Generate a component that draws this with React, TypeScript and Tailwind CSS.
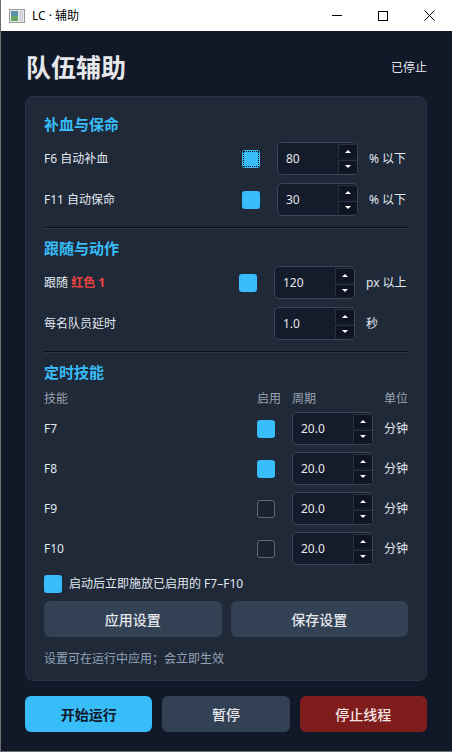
import React from "react";

const font = { fontFamily: '"Noto Sans", "Noto Sans CJK SC", sans-serif' };

function WindowIcon() {
  return (
    <svg width="16" height="14" viewBox="0 0 16 14">
      <rect x="0.5" y="0.5" width="15" height="13" fill="#e8e8e8" stroke="#9a9a9a" />
      <rect x="2" y="2" width="7" height="10" fill="#5a8fa8" />
      <rect x="2" y="7" width="7" height="5" fill="#6aa86a" />
      <rect x="10" y="2" width="4" height="10" fill="#cfd6dc" />
    </svg>
  );
}

function TitleBar() {
  return (
    <div className="flex h-[31px] shrink-0 items-center bg-white">
      <div className="ml-[8px] flex items-center">
        <WindowIcon />
      </div>
      <span className="ml-[7px] text-[12px] text-black">LC · 辅助</span>
      <div className="ml-auto flex h-full">
        <div className="flex h-full w-[46px] items-center justify-center">
          <div className="h-px w-[10px] bg-black" />
        </div>
        <div className="flex h-full w-[46px] items-center justify-center">
          <div className="h-[10px] w-[10px] border border-black" />
        </div>
        <div className="flex h-full w-[46px] items-center justify-center">
          <svg width="11" height="11" viewBox="0 0 11 11">
            <path d="M0.5 0.5 L10.5 10.5 M10.5 0.5 L0.5 10.5" stroke="#000" strokeWidth="1" />
          </svg>
        </div>
      </div>
    </div>
  );
}

function StepButton({ up }: { up?: boolean }) {
  return (
    <div className="flex flex-1 items-center justify-center border-t border-l border-[#2a3242] bg-[#0f1522]">
      {up ? (
        <div className="h-0 w-0 border-x-[3px] border-b-[3px] border-x-transparent border-b-white" />
      ) : (
        <div className="h-0 w-0 border-x-[3px] border-t-[3px] border-x-transparent border-t-white" />
      )}
    </div>
  );
}

function SpinBox({ value }: { value: string }) {
  return (
    <div className="flex h-[33px] w-[81px] rounded-[5px] border border-[#3a4558] bg-[#141b2b]">
      <div className="flex flex-1 items-center pl-[8px] text-[12px] text-[#e5e7eb]">{value}</div>
      <div className="flex w-[19px] flex-col gap-[2px] py-[1px]">
        <StepButton up />
        <StepButton />
      </div>
    </div>
  );
}

function CheckBox({ checked, focused }: { checked?: boolean; focused?: boolean }) {
  if (!checked) {
    return <div className="h-[18px] w-[18px] rounded-[3px] border border-[#5d6778] bg-[#1b2331]" />;
  }
  return (
    <div className="relative h-[18px] w-[18px] rounded-[3px] bg-[#38bdf8]">
      {focused && <div className="absolute inset-[1px] border border-dotted border-black" />}
    </div>
  );
}

function SectionTitle({ children }: { children: React.ReactNode }) {
  return <div className="flex h-[20px] items-center text-[15px] font-bold text-[#38bdf8]">{children}</div>;
}

function Divider() {
  return <div className="h-[2px] border-t border-[#0c111b] bg-[#2c3647]" />;
}

function Label({ children }: { children: React.ReactNode }) {
  return <div className="text-[12px] text-[#e2e8f0]">{children}</div>;
}

function Suffix({ children }: { children: React.ReactNode }) {
  return <div className="text-[12px] text-[#e2e8f0]">{children}</div>;
}

const skills = [
  { key: "F7", on: true },
  { key: "F8", on: true },
  { key: "F9", on: false },
  { key: "F10", on: false },
];

export default function App() {
  return (
    <div
      style={font}
      className="flex h-[752px] w-[452px] flex-col border-l border-b border-[#6e6e6e] bg-[#111827]"
    >
      <TitleBar />
      <div className="flex flex-1 flex-col pl-[24px] pr-[25px]">
        <div className="mt-[19px] flex h-[36px] items-center justify-between">
          <h1 className="pl-[1px] text-[25px] font-bold text-[#e5e7eb]">队伍辅助</h1>
          <span className="text-[12px] text-[#e5e7eb]">已停止</span>
        </div>

        <div className="mt-[10px] rounded-[8px] border border-[#283446] bg-[#1f2937] px-[18px] pt-[17px] pb-[11px]">
          <SectionTitle>补血与保命</SectionTitle>
          <div className="mt-[8px] grid grid-cols-[1fr_24px_81px_39px] items-center gap-x-[11px] gap-y-[8px]">
            <Label>F6 自动补血</Label>
            <CheckBox checked focused />
            <SpinBox value="80" />
            <Suffix>% 以下</Suffix>
            <Label>F11 自动保命</Label>
            <CheckBox checked />
            <SpinBox value="30" />
            <Suffix>% 以下</Suffix>
          </div>

          <div className="mt-[11px]">
            <Divider />
          </div>

          <div className="mt-[9px]">
            <SectionTitle>跟随与动作</SectionTitle>
          </div>
          <div className="mt-[8px] grid grid-cols-[1fr_24px_81px_42px] items-center gap-x-[11px] gap-y-[8px]">
            <Label>
              跟随 <span className="font-bold text-[#ef4444]">红色 1</span>
            </Label>
            <CheckBox checked />
            <SpinBox value="120" />
            <Suffix>px 以上</Suffix>
            <Label>每名队员延时</Label>
            <div />
            <SpinBox value="1.0" />
            <Suffix>秒</Suffix>
          </div>

          <div className="mt-[11px]">
            <Divider />
          </div>

          <div className="mt-[9px]">
            <SectionTitle>定时技能</SectionTitle>
          </div>
          <div className="mt-[8px] grid h-[18px] grid-cols-[1fr_24px_81px_24px] items-center gap-x-[11px] text-[12px] text-[#9ca3af]">
            <div>技能</div>
            <div>启用</div>
            <div>周期</div>
            <div>单位</div>
          </div>
          <div className="mt-[4px] grid grid-cols-[1fr_24px_81px_24px] items-center gap-x-[11px] gap-y-[7px]">
            {skills.map((s) => (
              <React.Fragment key={s.key}>
                <Label>{s.key}</Label>
                <CheckBox checked={s.on} />
                <SpinBox value="20.0" />
                <Suffix>分钟</Suffix>
              </React.Fragment>
            ))}
          </div>

          <div className="mt-[10px] flex h-[18px] items-center gap-[7px]">
            <CheckBox checked />
            <span className="text-[12px] text-[#e2e8f0]">启动后立即施放已启用的 F7–F10</span>
          </div>

          <div className="mt-[8px] grid grid-cols-2 gap-[9px]">
            <button className="h-[36px] rounded-[6px] bg-[#334155] text-[14px] font-medium text-[#e5e7eb]">
              应用设置
            </button>
            <button className="h-[36px] rounded-[6px] bg-[#334155] text-[14px] font-medium text-[#e5e7eb]">
              保存设置
            </button>
          </div>

          <div className="mt-[12px] flex h-[20px] items-center text-[12px] text-[#94a3b8]">
            设置可在运行中应用；会立即生效
          </div>
        </div>

        <div className="mt-[15px] grid grid-cols-3 gap-[10px]">
          <button className="h-[36px] rounded-[6px] bg-[#38bdf8] text-[14px] font-bold text-[#0f172a]">
            开始运行
          </button>
          <button className="h-[36px] rounded-[6px] bg-[#334155] text-[14px] font-medium text-[#e5e7eb]">
            暂停
          </button>
          <button className="h-[36px] rounded-[6px] bg-[#7f1d1d] text-[14px] font-medium text-[#f3e4e4]">
            停止线程
          </button>
        </div>
      </div>
    </div>
  );
}
